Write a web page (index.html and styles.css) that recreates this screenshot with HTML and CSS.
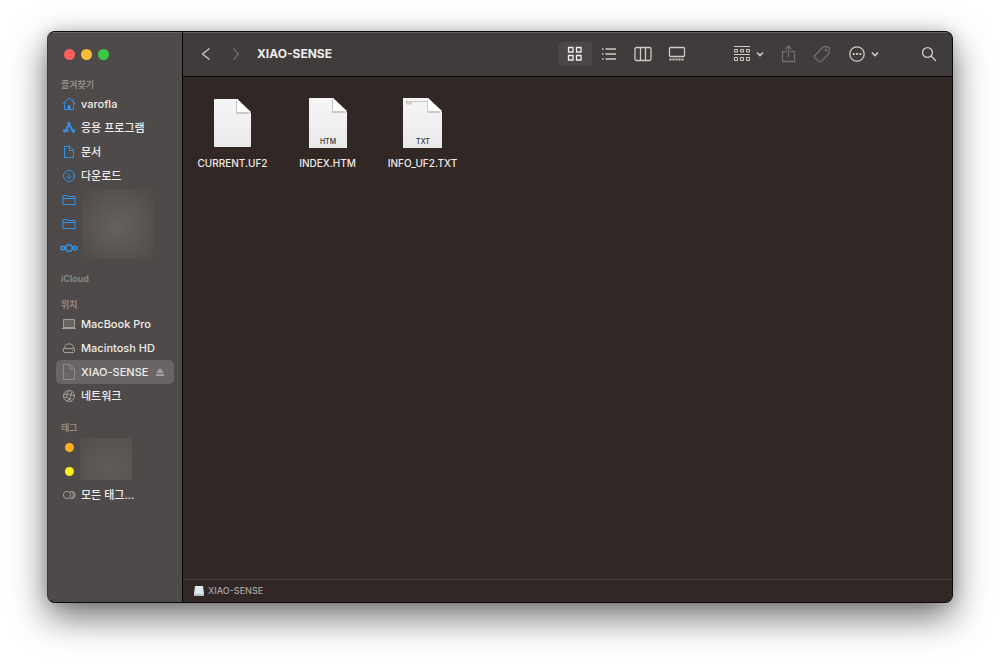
FILE: index.html
```html
<!DOCTYPE html>
<html lang="ko">
<head>
<meta charset="utf-8">
<meta name="viewport" content="width=device-width, initial-scale=1">
<title>XIAO-SENSE</title>
<link rel="stylesheet" href="styles.css">
</head>
<body>
<main class="window">
  <nav class="sidebar" aria-label="사이드바">
    <div class="lights">
      <button class="light red" aria-label="닫기"></button>
      <button class="light amber" aria-label="최소화"></button>
      <button class="light green" aria-label="확대"></button>
    </div>

    <section class="group favorites">
      <h2>즐겨찾기</h2>
      <ul>
        <li><a href="#" class="row"><svg class="blue" viewBox="0 0 16 16"><path d="M1.500 8 8 2l6.500 6M3.500 6.500V13.500H12.500V6.500M12 5.500V3"/><path class="solid" d="M7 9.500h2v4h-2z"/></svg>varofla</a></li>
        <li><a href="#" class="row"><svg class="blue thick" viewBox="0 0 16 16"><path d="M7 2.500 13 13M9 2.500 3.500 12.500M2 10.500h6M10.500 10.500H14"/></svg>응용 프로그램</a></li>
        <li><a href="#" class="row"><svg class="blue" viewBox="0 0 16 16"><path d="M4.500 2.500H9L12.500 6v7.500H3.500v-11zM8.500 2.500V6.500h4"/></svg>문서</a></li>
        <li><a href="#" class="row"><svg class="blue" viewBox="0 0 16 16"><circle cx="8" cy="8" r="5.500"/><path d="M8 5v5.500M6 8.500l2 2 2-2"/></svg>다운로드</a></li>
        <li><a href="#" class="row" aria-label="폴더"><svg class="blue" viewBox="0 0 16 16"><path d="M2 12.500v-9H6L7.500 4.500h6.500v8zM2 6.500h12"/></svg></a></li>
        <li><a href="#" class="row" aria-label="폴더"><svg class="blue" viewBox="0 0 16 16"><path d="M2 12.500v-9H6L7 4.500h7v8zM2 6.500h12"/></svg></a></li>
        <li><a href="#" class="row" aria-label="클라우드"><svg class="blue" viewBox="0 0 16 16"><circle class="ring" cx="8" cy="8" r="3.300"/><circle class="ring" cx="1.800" cy="8" r="1.800"/><circle class="ring" cx="14.200" cy="8" r="1.800"/></svg></a></li>
      </ul>
      <span class="veil"></span>
    </section>

    <section class="group cloud"><h2>iCloud</h2></section>

    <section class="group places">
      <h2>위치</h2>
      <ul>
        <li><a href="#" class="row"><svg viewBox="0 0 16 16"><path class="fill" d="M2.500 3.500h11v8h-11z"/><path d="M1 12.500h14"/></svg>MacBook Pro</a></li>
        <li><a href="#" class="row"><svg viewBox="0 0 16 16"><path d="M2.500 9 5 4.500Q8 3 11 4.500L13.500 9v2.500Q13 12.500 12 12.500H4Q3 12.500 2.500 11.500zM2.500 9.500Q3 8.500 4 8.500h8q1 0 1.500 1M11 10.500h1"/></svg>Macintosh HD</a></li>
        <li><a href="#" class="row current" aria-current="page"><svg class="thin" viewBox="0 0 16 16"><path d="M2.500 .500H9L13.500 5v10.500h-11zM9 .500V5h4.500"/></svg>XIAO-SENSE<svg class="eject" viewBox="0 0 10 10"><path d="M5 1 9 6H1zM1 7h8v2H1z"/></svg></a></li>
        <li><a href="#" class="row"><svg viewBox="0 0 16 16"><circle cx="8" cy="8" r="5.500"/><path d="M8 2.500 6 6l-3.500 1M6 6l4 1 1-4M10 7l3.500 1M10 7l-1 4 2 2M9 11l-4 2M9 11 5.500 9 6 6M5.500 9l-3 1"/></svg>네트워크</a></li>
      </ul>
    </section>

    <section class="group tags">
      <h2>태그</h2>
      <ul>
        <li><a href="#" class="row" aria-label="주황 태그"><span class="dot orange"></span></a></li>
        <li><a href="#" class="row" aria-label="노랑 태그"><span class="dot yellow"></span></a></li>
        <li><a href="#" class="row"><svg viewBox="0 0 16 16"><circle cx="6" cy="8" r="3.600"/><path d="M9 4.400a3.600 3.600 0 0 1 0 7.200M10.600 4.400a3.600 3.600 0 0 1 0 7.200"/></svg>모든 태그...</a></li>
      </ul>
      <span class="veil"></span>
    </section>
  </nav>

  <div class="content">
    <header class="toolbar">
      <button class="tool nav" aria-label="뒤로"><svg viewBox="0 0 18 18"><path d="M12.500 3.500 5.500 9l7 5.500"/></svg></button>
      <button class="tool nav faint" aria-label="앞으로" disabled><svg viewBox="0 0 18 18"><path d="M6.500 3.500 11.500 9l-5 5.500"/></svg></button>
      <h1>XIAO-SENSE</h1>
      <div class="views">
        <button class="tool on" aria-label="아이콘 보기"><svg viewBox="0 0 18 18"><path d="M2.500 2.500h4.500v4.500h-4.500zM10.500 2.500h4.500v4.500h-4.500zM2.500 10.500h4.500v4.500h-4.500zM10.500 10.500h4.500v4.500h-4.500z"/></svg></button>
        <button class="tool" aria-label="목록 보기"><svg viewBox="0 0 18 18"><path d="M5.500 4h10.500M5.500 9h10.500M5.500 14h10.500M2 4h1.500M2 9h1.500M2 14h1.500"/></svg></button>
        <button class="tool" aria-label="계층 보기"><svg viewBox="0 0 18 18"><rect x="1" y="2.500" width="16" height="13" rx="1.500"/><path d="M6.500 2.500v13M11.500 2.500v13"/></svg></button>
        <button class="tool" aria-label="갤러리 보기"><svg viewBox="0 0 18 18"><rect x="1.500" y="2.500" width="15" height="9" rx="1"/><path class="dash" d="M1.500 14.500h15"/></svg></button>
      </div>
      <button class="tool menu group-by" aria-label="그룹"><svg class="thin" viewBox="0 0 18 18"><path d="M1 1.500h16M1 9.500h16M1.500 4.500h3v2.500h-3zM7.500 4.500h3v2.500h-3zM13.500 4.500h3v2.500h-3zM1.500 12.500h3v3h-3zM7.500 12.500h3v3h-3zM13.500 12.500h3v3h-3z"/></svg><svg class="chevron" viewBox="0 0 8 8"><path d="M1 2.500 4 5.500l3-3"/></svg></button>
      <button class="tool share faint" aria-label="공유" disabled><svg viewBox="0 0 18 18"><path d="M6.500 6.500h-4v10h12v-10h-4M8.500 12V1M5.500 4l3-3 3 3"/></svg></button>
      <button class="tool tag faint" aria-label="태그" disabled><svg viewBox="0 0 18 18"><path d="M1.500 11 9.500 2.500Q10.500 1.500 12 1.500l3.500.500q1 .500 1 1.500l-.500 4q0 1-1 2L8 16.500q-1 .500-2 0L1.500 12.500q-.500-.500 0-1.500z"/><circle cx="13" cy="5" r=".800"/></svg></button>
      <button class="tool menu more" aria-label="동작"><svg viewBox="0 0 18 18"><circle cx="9" cy="9" r="7.200"/><path class="dots" d="M4.800 9h1.800M8.100 9h1.800M11.400 9h1.800"/></svg><svg class="chevron" viewBox="0 0 8 8"><path d="M1 2.500 4 5.500l3-3"/></svg></button>
      <button class="tool search" aria-label="검색"><svg viewBox="0 0 18 18"><circle cx="7.500" cy="7.500" r="4.900"/><path d="m11 11 5 5"/></svg></button>
    </header>

    <ul class="files">
      <li class="file"><svg viewBox="0 0 40 54"><defs><linearGradient id="paper" x2="0" y2="1"><stop offset="0" stop-color="#f6f6f6"/><stop offset="1" stop-color="#e9e9ea"/></linearGradient></defs><path fill="url(#paper)" d="M1 3q0-1 1-1h22.500L38 16v33q0 1-1 1H2q-1 0-1-1z"/><path fill="#c9c9c9" d="M23 3v13q0 1 1 1h13z"/><path fill="#fff" d="M24 2v12q0 1 1 1h13z"/></svg>CURRENT.UF2</li>
      <li class="file"><svg viewBox="0 0 40 54"><path fill="url(#paper)" d="M1 1h24l14 14v36H1z"/><path fill="#c9c9c9" d="M24 2v13q0 1 1 1h13z"/><path fill="#fff" d="M25 1v12q0 1 1 1h13z"/><text x="20" y="47">HTM</text></svg>INDEX.HTM</li>
      <li class="file"><svg viewBox="0 0 40 54"><path fill="url(#paper)" d="M0 1h25l14 14v36H0z"/><path fill="#c9c9c9" d="M24 2v13q0 1 1 1h13z"/><path fill="#fff" d="M25 1v12q0 1 1 1h13z"/><path stroke="#aaa" stroke-width=".7" stroke-dasharray="3 .5" d="M3 4.500h21M3 5.700h7M3 6.900h6"/><text x="20" y="47">TXT</text></svg>INFO_UF2.TXT</li>
    </ul>

    <footer class="path"><svg viewBox="0 0 12 12"><path fill="#dce9ec" d="M2 1h8l1 8H1z"/><path fill="#b4bfc2" d="M1 9h10v2H1z"/></svg>XIAO-SENSE</footer>
  </div>
</main>
</body>
</html>
```

FILE: styles.css
```css
* { box-sizing: border-box; }

body {
  margin: 0;
  min-height: 100vh;
  display: flex;
  padding: 31px 47px 62px;
  background: #fff;
  color: #f0ecea;
  font: 500 11px/16px Inter, "Noto Sans CJK KR", sans-serif;
}

ul { list-style: none; margin: 0; padding: 0; }
button { border: 0; padding: 0; background: none; color: inherit; font: inherit; }
a { color: inherit; text-decoration: none; }
svg { fill: none; stroke: currentColor; flex: none; }

.window {
  flex: 1;
  display: flex;
  overflow: hidden;
  border: 1px solid #0b0909;
  border-left-color: #3c3938;
  border-radius: 8px;
  background: #4e4a49;
  box-shadow: 0 14px 36px rgba(0, 0, 0, .56), 0 0 14px rgba(0, 0, 0, .14);
}

.sidebar {
  flex: none;
  width: 135px;
  padding: 17px 8px;
  border-right: 1px solid #050404;
  box-shadow: inset 0 1px #6b6866;
}

.lights { display: flex; gap: 6px; padding: 0 8px; }
.light { width: 11px; height: 11px; border-radius: 50%; }
.red { background: #fc605b; }
.amber { background: #fdbb3a; }
.green { background: #3bc845; }

.group { position: relative; }
.group h2 {
  margin: 0;
  padding-left: 5px;
  color: #8e8a88;
  font-size: 9px;
  font-weight: 600;
  line-height: 15px;
}
.favorites { margin-top: 17px; }
.cloud { margin-top: 11px; }
.places { margin-top: 11px; }
.tags { margin-top: 12px; }

.row {
  display: flex;
  align-items: center;
  gap: 4px;
  height: 24px;
  padding: 0 5px;
  border-radius: 5px;
  white-space: nowrap;
}
.row svg { width: 16px; height: 16px; color: #a29e9c; overflow: visible; }
.row .thin { color: #8f8b89; }
.row .blue { color: #3193e6; }
.row .thick { stroke-width: 2; }
.ring { stroke-width: 1.5; }
.row .solid, .row .fill { fill: currentColor; }
.row .fill { fill-opacity: .3; }
.current { background: #696564; }
.row .eject { width: 10px; height: 10px; margin-left: auto; margin-right: 4px; fill: currentColor; stroke: none; }
.dot { width: 9px; height: 9px; margin-left: 4px; border-radius: 50%; }
.orange { background: #ffb01c; }
.yellow { background: #fff01b; }

.veil {
  position: absolute;
  left: 26px;
  top: 112px;
  width: 71px;
  height: 70px;
  background: radial-gradient(circle at 50% 52%, #65615f, #595654 50%, #4f4b49 95%);
}
.tags .veil {
  left: 24px;
  top: 18px;
  width: 52px;
  height: 42px;
  background: radial-gradient(circle at 60% 70%, #5e5b59, #595551 60%, #524e4a);
}

.content { flex: 1; min-width: 0; display: flex; flex-direction: column; background: #312826; }

.toolbar {
  display: flex;
  align-items: center;
  height: 45px;
  padding: 0 14px;
  background: #403c3b;
  border-bottom: 1px solid #050404;
  box-shadow: inset 0 1px #656160;
}
.toolbar h1 { margin: 0; font-size: 12px; font-weight: 700; line-height: 16px; }
.tool { display: flex; align-items: center; justify-content: center; color: #cfcbc9; }
.tool svg { width: 18px; height: 18px; stroke-width: 1.3; }
.tool .thin { stroke-width: 1; }
.nav { width: 18px; margin-right: 12px; }
.faint { color: #706c6b; }
.views { display: flex; margin-left: auto; }
.views .tool { width: 34px; height: 24px; border-radius: 4px; }
.views .on { background: #4b4746; color: #f0ecea; }
.dash { stroke-dasharray: 2 1; stroke-width: 2; }
.menu { gap: 5px; }
.tool .chevron { width: 8px; height: 8px; stroke-width: 1.6; }
.dots { stroke-width: 2; }
.group-by { margin-left: 39px; }
.share { margin-left: 16px; }
.tag { margin-left: 15px; }
.more { margin-left: 17px; }
.search { margin-left: 41px; }

.files { flex: 1; display: flex; flex-wrap: wrap; align-content: flex-start; padding: 20px 2px; }
.file { display: flex; flex-direction: column; align-items: center; gap: 4px; width: 95px; font-size: 10px; }
.file svg { width: 40px; height: 54px; stroke: none; }
.file text { fill: #333; font-size: 7px; text-anchor: middle; }

.path {
  display: flex;
  align-items: center;
  gap: 3px;
  height: 23px;
  padding: 0 10px;
  border-top: 1px solid #484140;
  color: #aaa5a3;
  font-size: 9px;
}
.path svg { width: 12px; height: 12px; stroke: none; }
```
